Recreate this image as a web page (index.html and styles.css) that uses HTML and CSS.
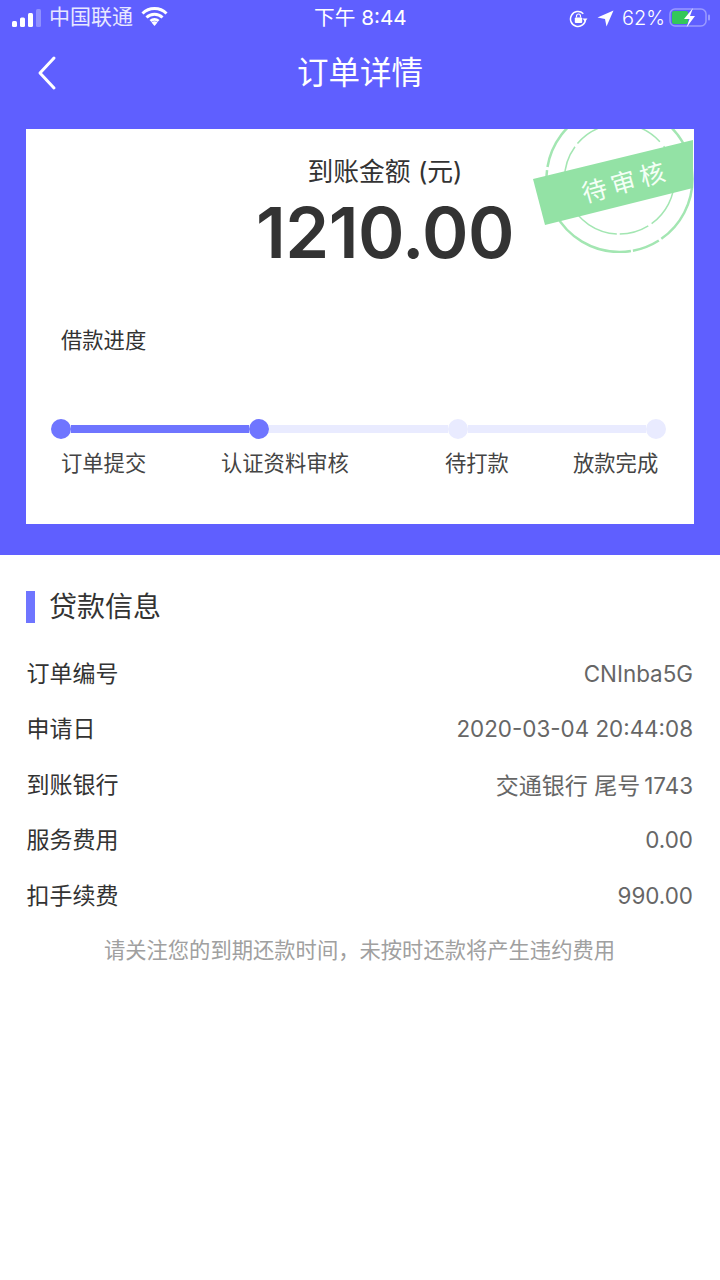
FILE: index.html
```html
<!DOCTYPE html>
<html lang="zh">
<head>
<meta charset="utf-8">
<title>订单详情</title>
<link rel="stylesheet" href="styles.css">
</head>
<body>
<section class="hero">
  <div class="status">
    <div class="status-left">
      <svg class="signal" width="30" height="20" viewBox="0 0 30 20"><rect x="0" y="13" width="5" height="6" rx="1.500" fill="#fff"/><rect x="8" y="9.500" width="5" height="9.500" rx="1.500" fill="#fff"/><rect x="16" y="5" width="5" height="14" rx="1.500" fill="#fff"/><rect x="24" y="1" width="5" height="18" rx="1.500" fill="#8f8fff"/></svg>
      <span class="carrier">中国联通</span>
      <svg class="wifi" width="27" height="20" viewBox="0 0 27 20"><path d="M1.500 7.500a17 17 0 0 1 24 0M5.500 11.500a11.500 11.500 0 0 1 16 0M9.500 15a6 6 0 0 1 8 0" fill="none" stroke="#fff" stroke-width="3"/><path d="M13.500 20l-3-3.500a4 4 0 0 1 6 0z" fill="#fff"/></svg>
    </div>
    <span class="clock">下午 8:44</span>
    <div class="status-right">
      <svg width="19" height="19" viewBox="0 0 19 19"><path d="M16.500 10a7.500 7.500 0 1 1-2.200-5.300" fill="none" stroke="#fff" stroke-width="1.500"/><path d="M18.500 9.500h-5l2.500 3z" fill="#fff"/><rect x="5.800" y="8.500" width="7.400" height="5.500" rx="1" fill="#fff"/><path d="M7.500 8.500V7a2 2 0 0 1 4 0v1.500" fill="none" stroke="#fff" stroke-width="1.200"/></svg>
      <svg class="arrow" width="17" height="17" viewBox="0 0 17 17"><path d="M16.500.500L9.500 16.500 8 9 .500 7.500z" fill="#fff"/></svg>
      <span class="pct">62%</span>
      <svg width="41" height="20" viewBox="0 0 41 20"><rect x="1" y="1" width="36" height="17" rx="5" fill="none" stroke="#9a9aff" stroke-width="1.500"/><rect x="39" y="6.500" width="2" height="6" rx="1" fill="#9a9aff"/><rect x="3" y="3" width="16" height="13" rx="2" fill="#34c759"/><path d="M24 0l-9 11h5.500L17.500 19.500 26 8h-5z" fill="#fff"/></svg>
    </div>
  </div>
  <header class="nav">
    <svg class="back" width="22" height="36" viewBox="0 0 22 36"><path d="M18 3L4 18l14 15" fill="none" stroke="#fff" stroke-width="3" stroke-linecap="round" stroke-linejoin="round"/></svg>
    <h1 class="title">订单详情</h1>
  </header>
  <div class="card">
    <svg class="stamp" width="162" height="124" viewBox="0 0 162 124">
      <circle class="ring-outer" cx="87.500" cy="50" r="73"/>
      <circle class="ring-inner" cx="87.500" cy="50" r="55"/>
      <path class="band" d="M1 50L161 11V59L13 96Z"/>
      <text class="stamp-text" transform="translate(53 74) rotate(-16)">待审核</text>
    </svg>
    <div class="amount-box">
      <div class="amount-label">到账金额 (元)</div>
      <div class="amount">1210.00</div>
    </div>
    <div class="progress-title">借款进度</div>
    <div class="track">
      <span class="dot dot-done"></span>
      <span class="seg seg-done"></span>
      <span class="dot dot-done"></span>
      <span class="seg"></span>
      <span class="dot"></span>
      <span class="seg"></span>
      <span class="dot"></span>
    </div>
    <div class="steps">
      <span>订单提交</span>
      <span>认证资料审核</span>
      <span>待打款</span>
      <span>放款完成</span>
    </div>
  </div>
</section>
<main class="info">
  <h2 class="section-title">贷款信息</h2>
  <div class="row"><span class="key">订单编号</span><span class="val">CNInba5G</span></div>
  <div class="row"><span class="key">申请日</span><span class="val">2020-03-04 20:44:08</span></div>
  <div class="row"><span class="key">到账银行</span><span class="val"><span class="cjk">交通银行 尾号</span>1743</span></div>
  <div class="row"><span class="key">服务费用</span><span class="val">0.00</span></div>
  <div class="row"><span class="key">扣手续费</span><span class="val">990.00</span></div>
  <p class="note">请关注您的到期还款时间，未按时还款将产生违约费用</p>
</main>
</body>
</html>
```
FILE: styles.css
```css
* { box-sizing: border-box; }
html, body { margin: 0; padding: 0; background: #fff; }
body { width: 720px; height: 1280px; overflow: hidden; font-family: "Inter", "Noto Sans CJK SC", sans-serif; color: #333; }

.hero { background: #5f5fff; height: 555px; padding-top: 4px; }
.status { display: flex; align-items: center; justify-content: space-between; height: 28px; padding: 0 10px 0 12px; color: #fff; position: relative; }
.status-left { display: flex; align-items: center; }
.carrier { font-size: 21px; line-height: 28px; margin: -3px 0 0 7px; color: #e8e8ff; }
.wifi { margin-left: 8px; margin-top: -4px; }
.clock { position: absolute; left: 314px; font-size: 20.700px; font-weight: 400; top: 0; line-height: 28px; }
.status-right { display: flex; align-items: center; }
.arrow { margin-left: 9px; }
.pct { font-size: 20px; font-weight: 300; margin: 0 4px 0 8px; }

.nav { height: 65px; display: flex; align-items: center; justify-content: center; position: relative; margin-top: 8px; }
.back { position: absolute; left: 36px; top: 15px; }
.title { margin: 0; font-size: 31.500px; font-weight: 400; color: #fff; line-height: 40px; }

.card { background: #fff; margin: 24px 26px 0; width: 668px; height: 395px; padding-top: 26px; position: relative; overflow: hidden; }
.stamp { position: absolute; right: 0; top: 0; }
.ring-outer { fill: none; stroke: #a3e6b2; stroke-width: 2.500; stroke-dasharray: 70 3 28 2 90 5 40 3; }
.ring-inner { fill: none; stroke: #a3e6b2; stroke-width: 1.500; stroke-dasharray: 52 4 30 3 60 6; }
.band { fill: #93e2a5; }
.stamp-text { font-size: 25px; fill: #f4fff6; letter-spacing: 5px; font-family: "Noto Sans CJK SC", sans-serif; }

.amount-box { padding-left: 50px; text-align: center; }
.amount-label { font-size: 25.800px; line-height: 34px; color: #333; }
.amount { font-size: 70.500px; line-height: 84px; margin-top: 2px; font-weight: 600; color: #333; letter-spacing: -.5px; }
.progress-title { margin: 51px 0 0 35px; font-size: 21.300px; line-height: 28px; color: #333; }
.track { display: flex; align-items: center; width: 615px; height: 20px; margin: 65px 0 0 25px; }
.seg { flex: 1; height: 8px; background: #e9ebff; }
.seg-done { background: #6f75ff; }
.dot { flex: none; width: 20px; height: 20px; border-radius: 50%; background: #e9ebff; }
.dot-done { background: #6f75ff; }
.steps { display: grid; grid-template-columns: 160px 224px 128px auto; margin: 10px 0 0 35px; font-size: 21.300px; line-height: 28px; color: #444; white-space: nowrap; }

.info { padding: 36px 27px 0 26px; }
.section-title { margin: 0 0 21px; height: 32px; border-left: 9px solid #6f75ff; padding-left: 14px; font-size: 28px; font-weight: 400; line-height: 32px; color: #333; }
.row { display: flex; justify-content: space-between; align-items: center; height: 55.500px; font-size: 22.400px; }
.key { color: #333; font-size: 23px; margin-left: .5px; }
.val { color: #666; margin-top: 3px; }
.cjk { font-size: 23px; margin-right: 4px; }
.note { margin: 14px 0 0; text-align: center; font-size: 21.300px; line-height: 28px; color: #a0a0a0; }
```
